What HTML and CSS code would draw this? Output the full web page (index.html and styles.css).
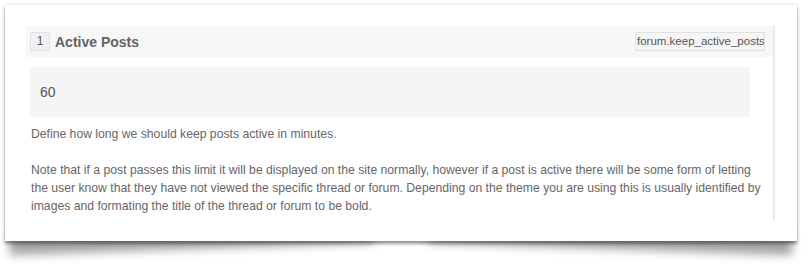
FILE: index.html
```html
<!DOCTYPE html>
<html lang="en">
<head>
  <meta charset="UTF-8">
  <title>Active Posts</title>
  <link rel="stylesheet" href="styles.css">
</head>
<body>
  <div class="paper">
    <div class="sheet">
      <div class="setting">
        <div class="setting-head">
          <span class="num">1</span>
          <span class="title">Active Posts</span>
          <span class="var">forum.keep_active_posts</span>
        </div>
        <div class="value">60</div>
        <p>Define how long we should keep posts active in minutes.</p>
        <p>Note that if a post passes this limit it will be displayed on the site normally, however if a post is active there will be some form of letting the user know that they have not viewed the specific thread or forum. Depending on the theme you are using this is usually identified by images and formating the title of the thread or forum to be bold.</p>
      </div>
    </div>
  </div>
</body>
</html>
```

FILE: styles.css
```css
body {
  margin: 0;
  min-height: 270px;
  background: #fff;
  font-family: 'Liberation Sans', Arial, sans-serif;
  color: #666;
}

/* paper card with lifted corners */
.paper {
  position: relative;
  z-index: 0;
  margin: 5px 0 0 5px;
  width: 792px;
}
.paper::before,
.paper::after {
  content: '';
  position: absolute;
  z-index: -1;
  bottom: 12px;
  width: 46%;
  height: 20px;
  box-shadow: 0 20px 10px rgba(0,0,0,0.36);
}
.paper::before { left: 4px; transform: rotate(-2deg); }
.paper::after { right: 4px; transform: rotate(2deg); }

.sheet {
  height: 236px;
  box-sizing: border-box;
  padding: 21px 22px 0 21px;
  background: #fff;
  box-shadow: 0 3px 3px rgba(0,0,0,0.38), 0 0 3px rgba(0,0,0,0.15);
}
.setting {
  height: 195px;
  border-right: 2px solid #ebebeb;
}
.setting-head {
  display: flex;
  align-items: center;
  height: 31px;
  padding: 0 8px 0 4px;
  background: #f7f7f7;
}
.num {
  width: 18px;
  height: 17px;
  line-height: 17px;
  text-align: center;
  font-size: 12px;
  color: #555;
  background: #f1f1f1;
  border: 1px solid #e2e2e2;
}
.title {
  margin-left: 5px;
  font-size: 14px;
  font-weight: bold;
  color: #636363;
}
.var {
  margin-left: auto;
  width: 127px;
  height: 17px;
  line-height: 17px;
  padding-left: 1px;
  overflow: hidden;
  white-space: nowrap;
  font-size: 11.5px;
  color: #555;
  background: #f5f5f5;
  border: 1px solid #e0e0e0;
}
.value {
  margin: 10px 0 0 4px;
  width: 710px;
  height: 50px;
  line-height: 50px;
  padding-left: 10px;
  font-size: 14px;
  color: #555;
  background: #f5f5f5;
}
p {
  width: 738px;
  margin: 8px 0 18px 5px;
  font-size: 12.2px;
  line-height: 18px;
}
```
